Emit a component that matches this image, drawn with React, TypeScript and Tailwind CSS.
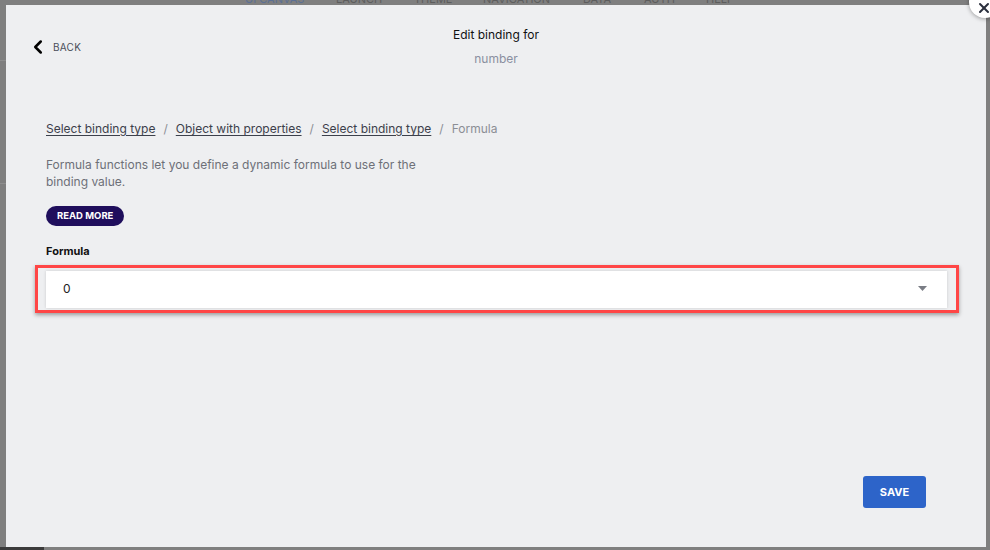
import React from "react";
import { ChevronLeft, X } from "lucide-react";

const tabs = [
  { label: "UI CANVAS", left: 245, active: true },
  { label: "LAUNCH", left: 336 },
  { label: "THEME", left: 414 },
  { label: "NAVIGATION", left: 483 },
  { label: "DATA", left: 583 },
  { label: "AUTH", left: 644 },
  { label: "HELP", left: 706 },
];

const crumbs = ["Select binding type", "Object with properties", "Select binding type"];

const App: React.FC = () => {
  return (
    <div
      className="relative w-[990px] h-[550px] overflow-hidden bg-[#7f7f7f]"
      style={{ fontFamily: "Inter, 'Open Sans', Arial, sans-serif" }}
    >
      {/* app behind the overlay */}
      {tabs.map((t) => (
        <span
          key={t.label}
          className={`absolute top-[-8px] text-[11px] leading-[14px] ${
            t.active ? "text-[#5b6f94]" : "text-[#5d5d5d]"
          }`}
          style={{ left: t.left }}
        >
          {t.label}
        </span>
      ))}
      <div className="absolute left-0 top-[60px] w-[6px] h-px bg-[#8e8e8e]" />
      <div className="absolute left-0 top-[183px] w-[6px] h-px bg-[#8e8e8e]" />
      <div className="absolute left-0 bottom-0 w-[44px] h-[3px] bg-[#3b3b3b]" />

      {/* modal */}
      <div className="absolute left-[6px] top-[5px] w-[980px] h-[542px] bg-[#eeeff1] flex flex-col">
        <div className="grid grid-cols-[1fr_auto_1fr] pt-[22px] px-[27px]">
          <button className="flex items-center gap-[4px] self-start mt-[9px] -ml-[6px] text-[#4a4e5a]">
            <ChevronLeft className="w-[22px] h-[22px] text-black" strokeWidth={2.75} />
            <span className="text-[10px] tracking-wide">BACK</span>
          </button>
          <div className="flex flex-col items-center">
            <div className="text-[12px] leading-[16px] text-[#111]">Edit binding for</div>
            <div className="text-[12px] leading-[16px] mt-[8px] text-[#8a8fa0]">number</div>
          </div>
          <div />
        </div>

        <div className="px-[40px] flex flex-col">
          <div className="mt-[54px] flex items-center text-[12px] leading-[16px]">
            {crumbs.map((c, i) => (
              <React.Fragment key={i}>
                <span className="underline underline-offset-2 text-[#3c404b]">{c}</span>
                <span className="mx-[8px] text-[#8b8e95]">/</span>
              </React.Fragment>
            ))}
            <span className="text-[#8b8e95]">Formula</span>
          </div>

          <p className="mt-[19px] w-[385px] text-[12px] leading-[17px] text-[#6d7078]">
            Formula functions let you define a dynamic formula to use for the binding value.
          </p>

          <button className="mt-[16px] self-start h-[20px] px-[11px] rounded-full bg-[#1f0e5c] text-white text-[9.5px] font-bold">
            READ MORE
          </button>

          <div className="mt-[17px] text-[11px] leading-[16px] font-bold text-[#111]">Formula</div>

          <div className="mt-[6px] -ml-[11px] w-[924px] border-[3px] border-[#ff4646] pl-[8px] pr-[9px] pt-[3px] pb-[2px] shadow-[0_2px_4px_rgba(0,0,0,0.35)]">
            <div className="h-[37px] bg-white flex items-center justify-between pl-[17px] pr-[20px] shadow-[0_0_3px_rgba(0,0,0,0.15)]">
              <span className="text-[12px] leading-[14px] -mt-[2px] text-[#222]">0</span>
              <svg width="9" height="5" viewBox="0 0 9 5" className="-mt-[2px]">
                <path d="M0 0h9L4.5 5z" fill="#7a7d85" />
              </svg>
            </div>
          </div>
        </div>

        <div className="mt-auto flex justify-end pr-[60px] pb-[39px]">
          <button className="w-[63px] h-[32px] rounded-[3px] bg-[#2d64c9] text-white text-[11px] font-bold">
            SAVE
          </button>
        </div>
      </div>

      {/* close */}
      <div className="absolute left-[969px] top-[-14px] w-[32px] h-[32px] rounded-full bg-white shadow-[0_1px_4px_rgba(0,0,0,0.35)] flex items-center justify-center">
        <X className="w-[16px] h-[16px] mt-[12px] mr-[2px] text-[#2a2f3d]" strokeWidth={3} />
      </div>
    </div>
  );
};

export default App;
